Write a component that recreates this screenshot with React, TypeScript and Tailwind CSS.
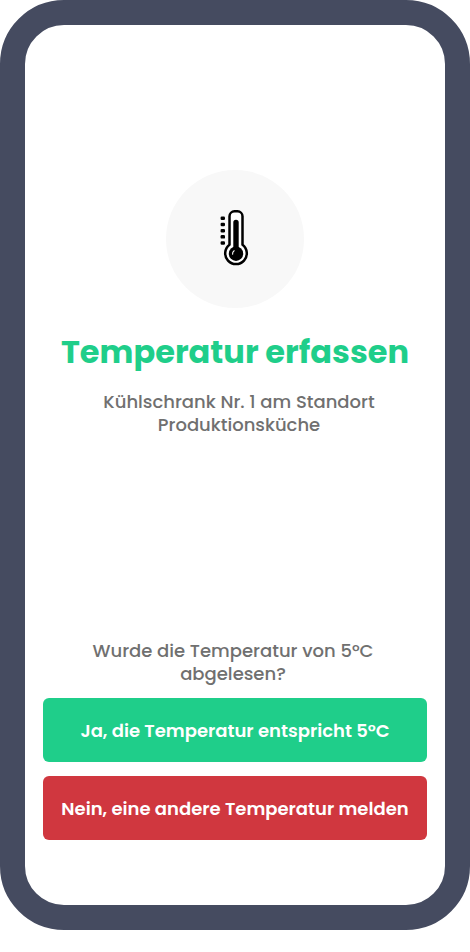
import React from "react";

// TODO: load the reading from the API
const task = {
  title: "Temperatur erfassen",
  device: "Kühlschrank Nr. 1 am Standort Produktionsküche",
  question: "Wurde die Temperatur von 5°C abgelesen?",
  confirm: "Ja, die Temperatur entspricht 5°C",
  reject: "Nein, eine andere Temperatur melden",
};

function ThermometerIcon() {
  return (
    <svg width="30" height="58" viewBox="0 0 30 58" fill="none" aria-hidden="true">
      {[6.5, 12.7, 18.9, 25.1, 31.3].map((y) => (
        <rect key={y} x="0.6" y={y} width="4.4" height="3.5" rx="1.2" fill="#000" />
      ))}
      <path
        d="M9.500 34.700V6.300a5 5 0 0 1 5-5h3a5 5 0 0 1 5 5V34.700a10.800 10.800 0 1 1-13 0Z"
        fill="#fff"
        stroke="#000"
        strokeWidth="2.500"
        strokeLinejoin="round"
      />
      <path d="M16 12.400V42" stroke="#000" strokeWidth="5.400" strokeLinecap="round" />
      <circle cx="16" cy="43.700" r="7.200" fill="#000" />
      <path d="M12.600 44.200c-.2-1.600.3-2.800 1.500-3.500" stroke="#fff" strokeWidth="1.100" strokeLinecap="round" />
    </svg>
  );
}

export default function App() {
  return (
    <div className="flex min-h-screen flex-col bg-white pb-[22px] font-[Poppins,Inter,sans-serif]">
      <main className="flex flex-1 flex-col rounded-[64px] border-[25px] border-[#454b60] bg-white px-[18px] pt-[145px] pb-[65px] text-center">
        <div className="mx-auto flex size-[138px] items-center justify-center rounded-full bg-[#f8f8f8]">
          <ThermometerIcon />
        </div>
        <h1 className="mt-6 text-[32px] leading-10 font-bold whitespace-nowrap text-[#1fce8a]">{task.title}</h1>
        <p className="mt-[18px] pr-8 pl-10 text-lg leading-[23px] font-medium text-[#707070]">{task.device}</p>

        <div className="mt-auto flex flex-col">
          <p className="pr-10 pl-9 text-lg leading-[23px] font-medium text-[#707070]">{task.question}</p>
          <button type="button" className="mt-[13px] h-16 rounded-md bg-[#1fce8a] pt-0.5 text-lg font-semibold whitespace-nowrap text-white">
            {task.confirm}
          </button>
          <button type="button" className="mt-[14px] h-16 rounded-md bg-[#d0373f] pt-0.5 text-lg font-semibold whitespace-nowrap text-white">
            {task.reject}
          </button>
        </div>
      </main>
    </div>
  );
}
